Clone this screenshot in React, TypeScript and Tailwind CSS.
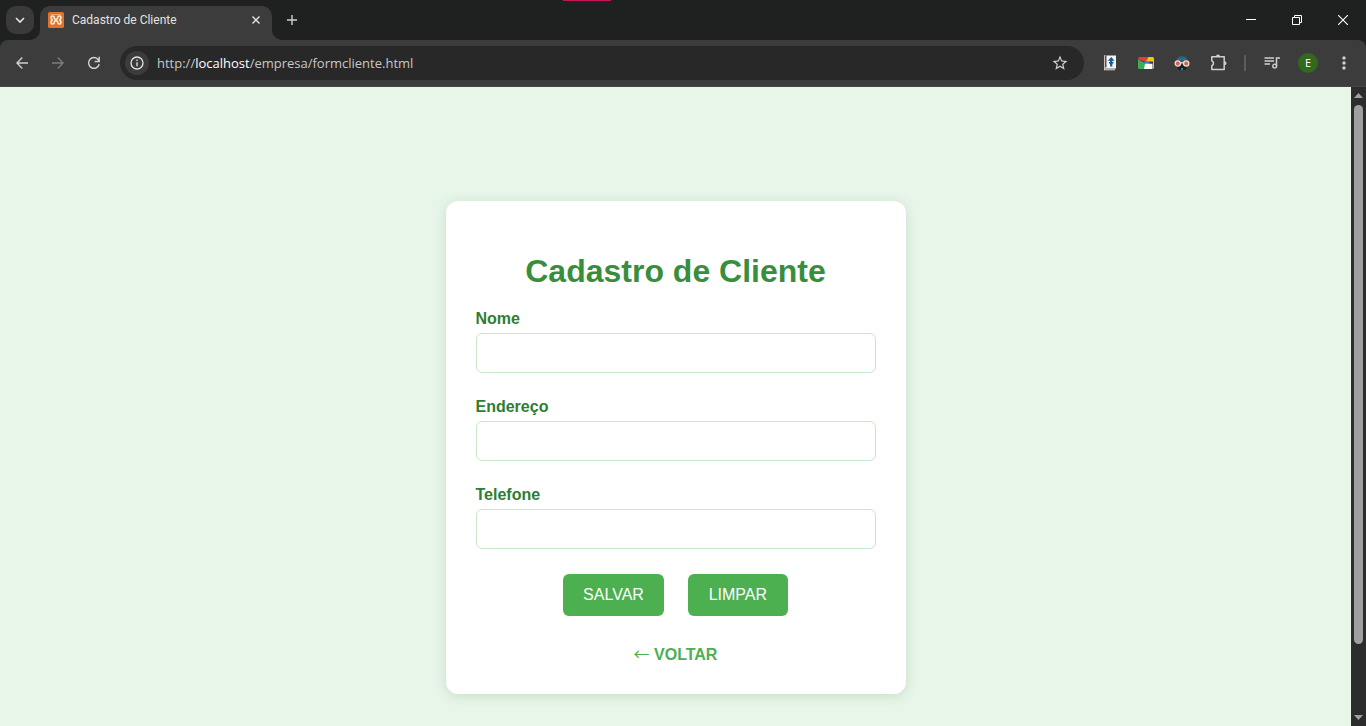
import type { ReactNode } from "react";
import { MdMoreVert, MdStarBorder } from "react-icons/md";

const CHROME_FONT = "font-['Open_Sans','Noto_Sans',sans-serif]";

function IconButton({ label, className, children }: { label: string; className: string; children: ReactNode }) {
  return (
    <button type="button" aria-label={label} className={`flex shrink-0 items-center justify-center ${className}`}>
      {children}
    </button>
  );
}

function XamppLogo() {
  return (
    <svg viewBox="0 0 16 16" className="size-4 shrink-0" aria-hidden="true">
      <rect width="16" height="16" rx="1.5" fill="#e0722c" />
      <path
        d="M6.200 6.200V5.600A1.600 1.600 0 0 0 3 5.600C3 7 4 7.300 4.300 8 4 8.700 3 9 3 10.400a1.600 1.600 0 0 0 3.200 0C6.200 9 7 8.800 8 8.800s1.800.2 1.800 1.600a1.600 1.600 0 0 0 3.200 0C13 9 12 8.700 11.700 8 12 7.300 13 7 13 5.600a1.600 1.600 0 0 0-3.200 0C9.800 7 9 7.200 8 7.200s-1.800-.2-1.800-1z"
        fill="none"
        stroke="#fff4e4"
        strokeWidth="1.500"
        strokeLinejoin="round"
      />
      <path d="M3 2.600h10" stroke="#f3b27f" strokeWidth=".8" />
    </svg>
  );
}

function TabStrip() {
  return (
    <div className="flex h-10 shrink-0 bg-[#1f2120] pl-1.5">
      <IconButton label="Pesquisar guias" className="mt-1.5 size-7 rounded-[10px] bg-[#3a3a3a]">
        <svg viewBox="0 0 10 10" className="size-2.5" fill="none" stroke="#e3e3e3" strokeWidth="1.6" aria-hidden="true">
          <path d="M1 3l4 4 4-4" />
        </svg>
      </IconButton>
      <div className="relative ml-1.5 mt-1.5 flex w-58 items-center rounded-t-[10px] bg-[#3c3c3c] px-2 pb-1.5">
        <svg viewBox="0 0 10 10" className="absolute -left-2.5 bottom-0 size-2.5" fill="#3c3c3c" aria-hidden="true">
          <path d="M10 0v10H0A10 10 0 0 0 10 0z" />
        </svg>
        <svg viewBox="0 0 10 10" className="absolute -right-2.5 bottom-0 size-2.5" fill="#3c3c3c" aria-hidden="true">
          <path d="M0 0v10h10A10 10 0 0 1 0 0z" />
        </svg>
        <XamppLogo />
        <span className="ml-2 flex-1 font-['Roboto',sans-serif] text-xs text-[#e3e3e3]">Cadastro de Cliente</span>
        <IconButton label="Fechar guia" className="size-4">
          <svg viewBox="0 0 8 8" className="size-2" stroke="#e3e3e3" strokeWidth="1.4" aria-hidden="true">
            <path d="M.5.5l7 7M7.5.5l-7 7" />
          </svg>
        </IconButton>
      </div>
      <IconButton label="Nova guia" className="ml-1.5 h-10 w-7">
        <svg viewBox="0 0 10 10" className="size-2.5" stroke="#d0d0d0" strokeWidth="1.4" aria-hidden="true">
          <path d="M5 0v10M0 5h10" />
        </svg>
      </IconButton>
      <div className="ml-auto flex text-white">
        <IconButton label="Minimizar" className="h-10 w-[46px]">
          <svg viewBox="0 0 10 10" className="size-2.5" fill="currentColor" aria-hidden="true">
            <path d="M0 4h10v1H0z" />
          </svg>
        </IconButton>
        <IconButton label="Restaurar" className="h-10 w-[46px]">
          <svg viewBox="0 0 10 10" className="size-2.5" fill="none" stroke="currentColor" aria-hidden="true">
            <path d="M.5 2.5h7v7h-7zM2.5 2.5v-2h7v7h-2" />
          </svg>
        </IconButton>
        <IconButton label="Fechar" className="h-10 w-[46px]">
          <svg viewBox="0 0 10 10" className="size-2.5" stroke="currentColor" strokeWidth="1.1" aria-hidden="true">
            <path d="M0 0l10 10M10 0L0 10" />
          </svg>
        </IconButton>
      </div>
    </div>
  );
}

function BookIcon() {
  return (
    <svg viewBox="0 0 16 16" className="size-4" aria-hidden="true">
      <path d="M2 .5h12v13H2z" fill="#f4f3ee" />
      <path d="M2 .5h1v13H2z" fill="#c9c2c4" />
      <path d="M3 .5h1.500v12H3z" fill="#55504e" />
      <path d="M2 13.300h11v2H2z" fill="#d8d4cc" />
      <path d="M3 13.800h11v.6H3z" fill="#77706c" />
      <path d="M9.200 2l3.400 3.700h-2.300v5.800H8.100V5.700H5.800z" fill="#175a96" />
      <path d="M7 7h4.400v1.600H7z" fill="#175a96" />
    </svg>
  );
}

function WindowIcon() {
  return (
    <svg viewBox="0 0 16 16" className="size-4" aria-hidden="true">
      <path d="M0 3.500Q0 2 1.500 2h9L12 5 8 7 0 4.500z" fill="#e33b3f" />
      <path d="M10.500 2h4Q16 2 16 3.500V13l-1 1V6.500H8z" fill="#fbc116" />
      <path d="M0 4.500L7 8v6H1.500Q0 14 0 12.500z" fill="#3bad55" />
      <path d="M6.500 6.500H12L11 9H6.500z" fill="#3d7fe4" />
      <path d="M7 8.700h7.500V14H6z" fill="#fffaf0" />
    </svg>
  );
}

function MaskIcon() {
  return (
    <svg viewBox="0 0 16 16" className="size-4" aria-hidden="true">
      <path d="M2 6.500Q2.500 1 8 1t6 5.500L12 9H4z" fill="#275f76" />
      <path d="M3.500 10h9v3L11 15H5l-1.500-2z" fill="#10202a" />
      <path d="M7 13h2v2H7z" fill="#3f7d93" />
      <path d="M4 4h8" stroke="#3f7d93" />
      <circle cx="3.800" cy="8.500" r="2.600" fill="#d0604f" stroke="#f6ddcc" strokeWidth="1.300" />
      <circle cx="12.200" cy="8.500" r="2.600" fill="#d0604f" stroke="#f6ddcc" strokeWidth="1.300" />
      <path d="M6.500 7.800h3" stroke="#f6ddcc" strokeWidth="1.200" />
    </svg>
  );
}

function Toolbar() {
  return (
    <div className="bg-[#1f2120]">
      <div className="flex h-[47px] items-center rounded-t-lg border-b border-[#464646] bg-[#3c3c3c] pl-1">
        <IconButton label="Voltar à página anterior" className="size-9">
          <svg viewBox="0 0 12 12" className="size-3" fill="none" stroke="#d0d0d0" strokeWidth="1.400" aria-hidden="true">
            <path d="M6.300 .6L.9 6l5.400 5.400M1 6h11" />
          </svg>
        </IconButton>
        <IconButton label="Avançar" className="size-9">
          <svg viewBox="0 0 12 12" className="size-3" fill="none" stroke="#7d7d7d" strokeWidth="1.400" aria-hidden="true">
            <path d="M5.700 .6L11.100 6l-5.400 5.400M11 6H0" />
          </svg>
        </IconButton>
        <IconButton label="Recarregar" className="size-9">
          <svg viewBox="0 0 14 14" className="size-3.5" fill="none" stroke="#d0d0d0" strokeWidth="1.500" aria-hidden="true">
            <path d="M12.200 8.200A5.400 5.400 0 1 1 11.300 3.700L12 4.700M12.200 .8v4.700H7.600" />
          </svg>
        </IconButton>
        <div className="ml-2 flex h-[34px] flex-1 items-center rounded-full bg-[#282828] pl-[5px] pr-3">
          <IconButton label="Informações do site" className="size-6 rounded-full bg-[#3c3c3c]">
            <svg viewBox="0 0 14 14" className="size-3.5" fill="none" stroke="#e3e3e3" strokeWidth="1.300" aria-hidden="true">
              <circle cx="7" cy="7" r="6" />
              <path d="M7 6.200v4M7 3.600v1.500" />
            </svg>
          </IconButton>
          <span className="ml-2 flex-1 pt-0.5 text-[13px] text-[#c7c7c7]">
            http://<span className="text-white">localhost</span>/empresa/formcliente.html
          </span>
          <IconButton label="Favoritar" className="size-6">
            <MdStarBorder className="size-[18px] text-[#d0d0d0]" />
          </IconButton>
        </div>
        <div className="ml-2 flex items-center">
          <IconButton label="Extensão de leitura" className="size-9"><BookIcon /></IconButton>
          <IconButton label="Extensão de janelas" className="size-9"><WindowIcon /></IconButton>
          <IconButton label="Extensão de privacidade" className="size-9"><MaskIcon /></IconButton>
          <IconButton label="Extensões" className="size-9">
            <svg viewBox="0 0 18 18" className="size-[18px]" aria-hidden="true">
              <path d="M2.800 2.800h12.400V15.500H2.800v-3.700a2.700 2.700 0 0 0 0-5z" fill="none" stroke="#d0d0d0" strokeWidth="1.500" strokeLinejoin="round" />
              <path d="M7 2.600a2 2 0 0 1 4 0zM15.500 7.200a2 2 0 0 1 0 4z" fill="#d0d0d0" />
            </svg>
          </IconButton>
          <span className="mx-2 h-4 w-0.5 bg-[#5c5c5c]" />
          <IconButton label="Controlar mídia" className="size-9">
            <svg viewBox="0 0 16 14" className="h-3.5 w-4" fill="none" stroke="#d0d0d0" strokeWidth="1.500" aria-hidden="true">
              <path d="M.5 2h9.500M.5 5h9.500M.5 8h5.500M12.500 10V2H16" />
              <circle cx="10.700" cy="10" r="1.900" strokeWidth="1.400" />
            </svg>
          </IconButton>
          <IconButton label="Perfil" className="size-9">
            <span className="flex size-5 items-center justify-center rounded-full bg-[#33691e] text-[11px] text-white">E</span>
          </IconButton>
          <IconButton label="Menu" className="size-9">
            <MdMoreVert className="size-5 text-[#d0d0d0]" />
          </IconButton>
          <span className="w-1" />
        </div>
      </div>
    </div>
  );
}

function Scrollbar() {
  return (
    <div className="flex w-[15px] shrink-0 flex-col items-center justify-between bg-[#2c2c2c] py-1.5" aria-hidden="true">
      <svg viewBox="0 0 9 5" className="h-[5px] w-[9px] shrink-0" fill="#9f9f9f">
        <path d="M4.500 0L9 5H0z" />
      </svg>
      <div className="mb-auto mt-[7px] h-[86%] w-[9px] rounded-full bg-[#9f9f9f]" />
      <svg viewBox="0 0 9 5" className="h-[5px] w-[9px] shrink-0" fill="#9f9f9f">
        <path d="M4.500 5L9 0H0z" />
      </svg>
    </div>
  );
}

function Field({ id, label, type = "text" }: { id: string; label: string; type?: string }) {
  return (
    <div className="mb-6">
      <label htmlFor={id} className="mb-[5px] block text-base leading-[19px] font-bold text-[#2e7d32]">
        {label}
      </label>
      <input id={id} name={id} type={type} className="block h-10 w-full rounded-md border border-[#c8e6c9] bg-white px-2.5 text-base outline-none" />
    </div>
  );
}

export default function App() {
  const button = "h-[42px] min-w-[100px] rounded-md bg-[#4caf50] px-5 text-base text-white";
  return (
    <div className="flex h-screen flex-col overflow-hidden">
      <header className={`relative ${CHROME_FONT}`}>
        <span className="absolute left-[563px] top-0 h-px w-12 bg-[#c2185b]" />
        <TabStrip />
        <Toolbar />
      </header>
      <div className="flex min-h-0 flex-1">
        <main className="flex flex-1 items-start justify-center overflow-hidden bg-[#e8f5e9] pt-[114px] font-['Liberation_Sans',Arial,sans-serif]">
          <form className="w-[460px] rounded-xl bg-white px-[30px] pt-[52px] pb-[30px] shadow-[0_2px_12px_rgba(56,142,60,0.2)]">
            <h1 className="mb-[19px] text-center text-[32px] leading-[37px] font-bold text-[#388e3c]">Cadastro de Cliente</h1>
            <Field id="nome" label="Nome" />
            <Field id="endereco" label="Endereço" />
            <Field id="telefone" label="Telefone" type="tel" />
            <div className="mt-[25px] flex justify-center gap-6">
              <button type="submit" className={button}>SALVAR</button>
              <button type="reset" className={button}>LIMPAR</button>
            </div>
            <div className="mt-[29px] text-center leading-[19px]">
              <a href="#" className="font-bold text-[#4caf50]">
                <span className="font-['Noto_Sans_CJK_JP',sans-serif] leading-none font-normal">←</span> VOLTAR
              </a>
            </div>
          </form>
        </main>
        <Scrollbar />
      </div>
    </div>
  );
}
